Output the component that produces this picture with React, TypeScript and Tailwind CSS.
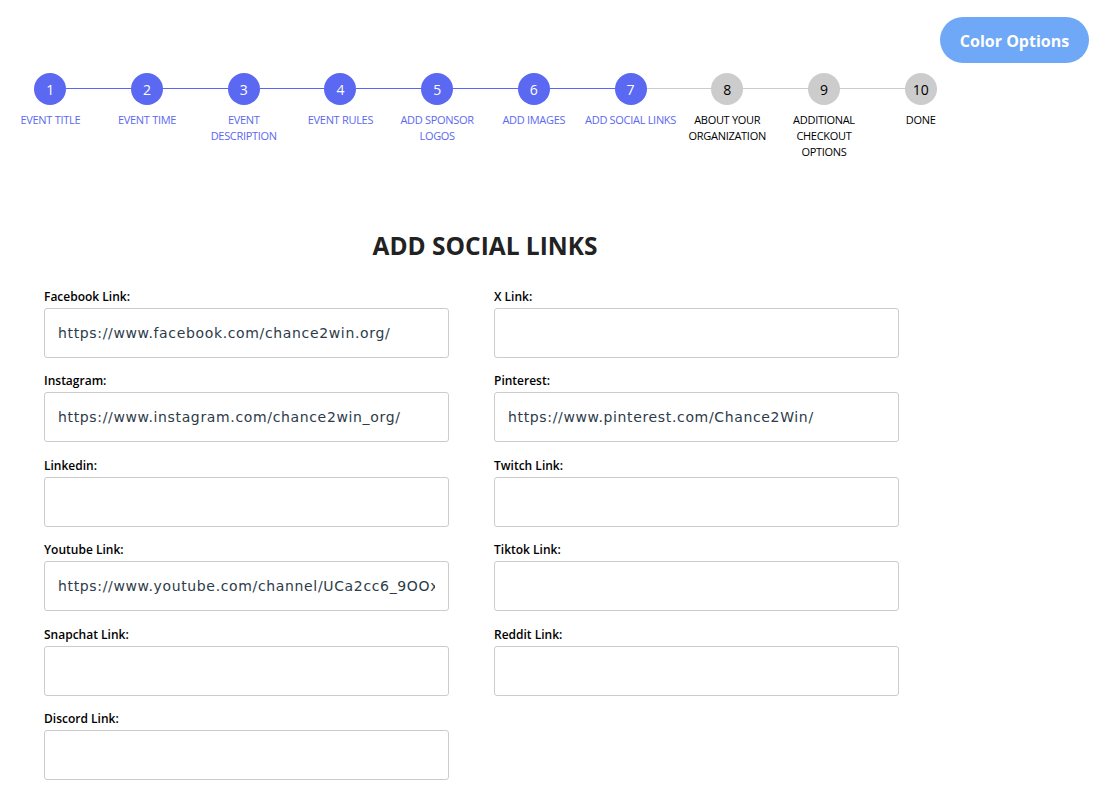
import React from "react";

const STEPS = [
  "EVENT TITLE",
  "EVENT TIME",
  "EVENT\nDESCRIPTION",
  "EVENT RULES",
  "ADD SPONSOR\nLOGOS",
  "ADD IMAGES",
  "ADD SOCIAL LINKS",
  "ABOUT YOUR\nORGANIZATION",
  "ADDITIONAL\nCHECKOUT\nOPTIONS",
  "DONE",
];

const CURRENT = 7;

const LEFT = [
  { label: "Facebook Link:", value: "https://www.facebook.com/chance2win.org/" },
  { label: "Instagram:", value: "https://www.instagram.com/chance2win_org/" },
  { label: "Linkedin:", value: "" },
  { label: "Youtube Link:", value: "https://www.youtube.com/channel/UCa2cc6_9OOxyzAbc" },
  { label: "Snapchat Link:", value: "" },
  { label: "Discord Link:", value: "" },
];

const RIGHT = [
  { label: "X Link:", value: "" },
  { label: "Pinterest:", value: "https://www.pinterest.com/Chance2Win/" },
  { label: "Twitch Link:", value: "" },
  { label: "Tiktok Link:", value: "" },
  { label: "Reddit Link:", value: "" },
];

function Field({ label, value }: { label: string; value: string }) {
  return (
    <div className="flex flex-col">
      <label className="h-[22px] text-[12px] font-semibold leading-[22px] text-black">{label}</label>
      <input
        type="text"
        defaultValue={value}
        className="h-[50px] w-full rounded-[3px] border border-[#cccccc] bg-white px-[13px] font-['DejaVu_Sans',sans-serif] text-[14px] tracking-[0.65px] text-[#2d3b4a] outline-none"
      />
    </div>
  );
}

export default function App() {
  return (
    <div className="min-h-[812px] w-[1100px] bg-white font-['Open_Sans',sans-serif]">
      <div className="flex justify-end pr-[11px] pt-[17px]">
        <button
          type="button"
          className="h-[46px] w-[149px] rounded-full bg-[#6ea8f6] pt-[2px] text-[16px] font-bold text-white"
        >
          Color Options
        </button>
      </div>

      <div className="relative ml-[2px] mt-[10px] grid w-[967px] grid-cols-10">
        <div className="absolute left-[48px] top-[15px] h-[1px] w-[580px] bg-[#5a67f0]" />
        <div className="absolute left-[628px] top-[15px] h-[1px] w-[290px] bg-[#cccccc]" />
        {STEPS.map((s, i) => {
          const done = i + 1 <= CURRENT;
          return (
            <div key={s} className="relative flex flex-col items-center">
              <div
                className={
                  done
                    ? "flex h-[32px] w-[32px] items-center justify-center rounded-full bg-[#5b68f1] text-[14px] text-white"
                    : "flex h-[32px] w-[32px] items-center justify-center rounded-full bg-[#cccccc] text-[14px] text-black"
                }
              >
                {i + 1}
              </div>
              <div
                className={
                  done
                    ? "mt-[7px] whitespace-pre-line text-center text-[11px] leading-[16px] tracking-[-0.3px] text-[#5b68f1]"
                    : "mt-[7px] whitespace-pre-line text-center text-[11px] leading-[16px] tracking-[-0.3px] text-black"
                }
              >
                {s}
              </div>
            </div>
          );
        })}
      </div>

      <h1 className="mt-[70px] w-[970px] text-center text-[24.5px] font-bold leading-[32px] text-[#222222]">
        ADD SOCIAL LINKS
      </h1>

      <div className="ml-[44px] mt-[24px] grid w-[855px] grid-cols-2 gap-x-[45px]">
        <div className="flex flex-col gap-[12.4px]">
          {LEFT.map((f) => (
            <Field key={f.label} {...f} />
          ))}
        </div>
        <div className="flex flex-col gap-[12.4px]">
          {RIGHT.map((f) => (
            <Field key={f.label} {...f} />
          ))}
        </div>
      </div>
    </div>
  );
}
